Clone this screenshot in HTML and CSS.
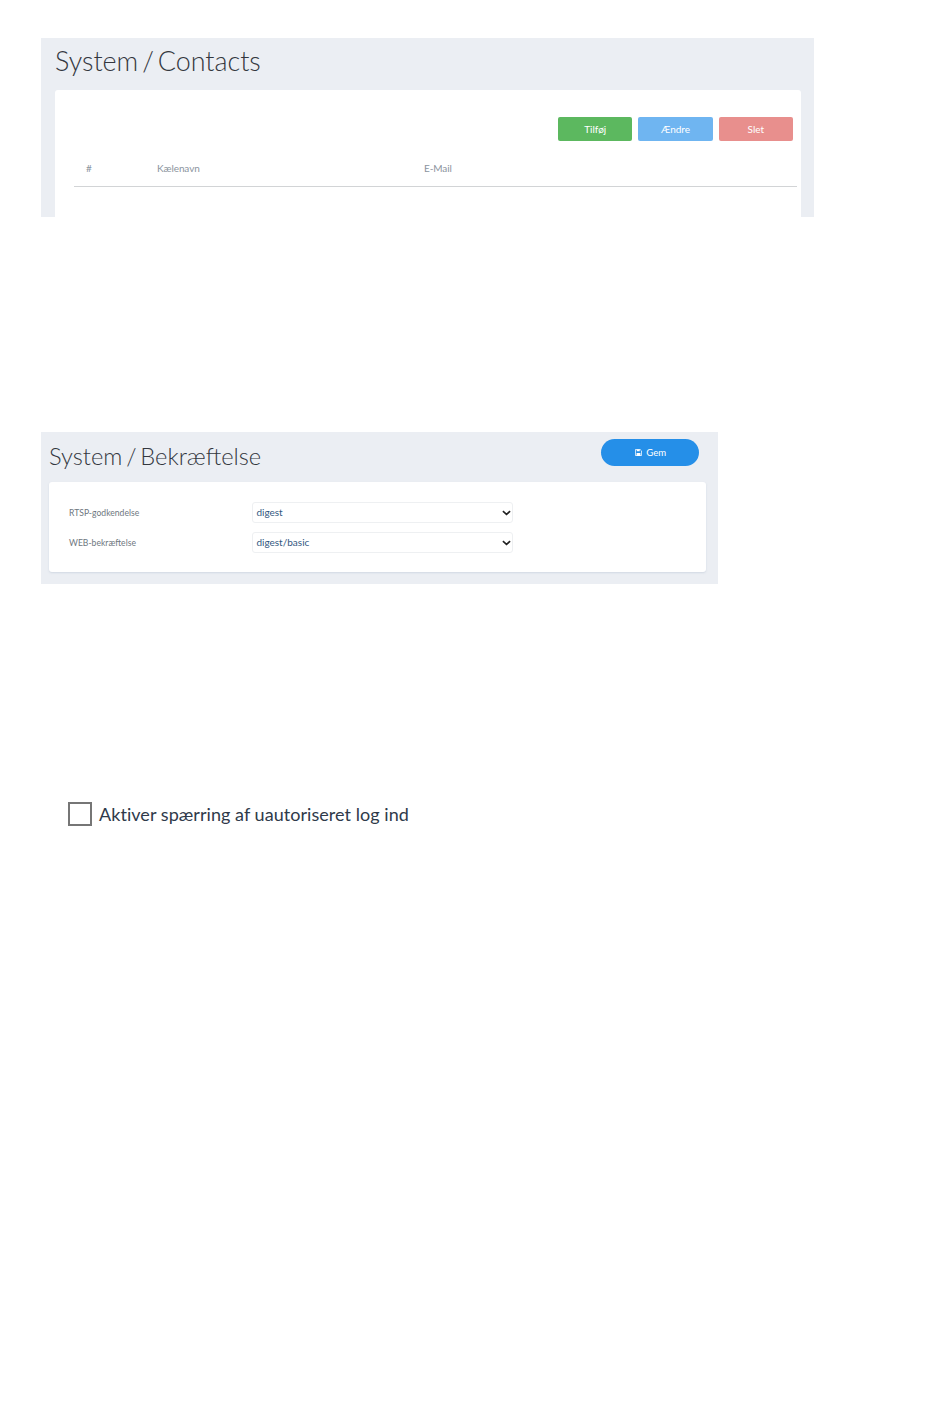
FILE: index.html
```html
<!DOCTYPE html>
<html lang="da">
<head>
<meta charset="utf-8">
<title>System</title>
<link rel="stylesheet" href="styles.css">
</head>
<body>
<section class="panel panel-contacts">
  <header class="panel-head"><h1 class="title title-contacts">System / Contacts</h1></header>
  <div class="card card-contacts">
    <div class="actions">
      <button class="btn btn-green">Tilføj</button>
      <button class="btn btn-blue">Ændre</button>
      <button class="btn btn-red">Slet</button>
    </div>
    <div class="table-head">
      <span class="col-num">#</span>
      <span class="col-nick">Kælenavn</span>
      <span class="col-mail">E-Mail</span>
    </div>
  </div>
</section>

<section class="panel panel-auth">
  <header class="panel-head head-auth">
    <h1 class="title title-auth">System / Bekræftelse</h1>
    <button class="btn-save">
      <svg class="save-icon" viewBox="0 0 8 8" aria-hidden="true"><path fill="none" stroke="currentColor" stroke-width=".9" d="M.5.5h5.3l1.7 1.7v5.3H.5z"/><path fill="currentColor" d="M2 .5h3.4v2.2H2zM1.8 4.6h4.4V8H1.8z"/></svg>
      <span>Gem</span>
    </button>
  </header>
  <div class="card card-auth">
    <div class="form-row">
      <label class="form-label" for="rtsp">RTSP-godkendelse</label>
      <select class="form-select" id="rtsp"><option>digest</option></select>
    </div>
    <div class="form-row">
      <label class="form-label" for="web">WEB-bekræftelse</label>
      <select class="form-select" id="web"><option>digest/basic</option></select>
    </div>
  </div>
</section>

<div class="lock-row">
  <span class="check-box"></span>
  <span class="lock-text">Aktiver spærring af uautoriseret log ind</span>
</div>
</body>
</html>
```
FILE: styles.css
```css
* { box-sizing: border-box; }
html, body { margin: 0; padding: 0; }
body {
  background: #fff;
  font-family: Lato, "Liberation Sans", sans-serif;
  padding: 38px 0 0 41px;
  min-height: 1409px;
}
.panel { background: #ebeef3; }
.panel-contacts {
  width: 773px;
  height: 179px;
  padding: 0 13px 0 14px;
  overflow: hidden;
  margin-bottom: 215px;
}
.panel-auth {
  width: 677px;
  height: 152px;
  padding: 0 12px 0 8px;
  margin-bottom: 218px;
}
.panel-head { height: 52px; display: flex; align-items: center; }
.panel-auth .panel-head { height: 50px; }
.head-auth { justify-content: space-between; }
.title {
  margin: 0;
  font-weight: 300;
  color: #33373e;
  line-height: 1;
}
.title-contacts { font-size: 26.9px; word-spacing: -3.4px; margin-top: -6px; }
.title-auth { font-size: 23.7px; word-spacing: -2.6px; margin-top: -1px; }
.card { background: #fff; border-radius: 3px; }
.card-contacts { height: 160px; padding-top: 27px; }
.actions { display: flex; justify-content: flex-end; gap: 6px; padding-right: 8px; }
.btn {
  width: 74.3px;
  height: 24px;
  border: 0;
  border-radius: 2px;
  color: #fff;
  font: 400 10px Lato, sans-serif;
  padding: 0;
}
.btn-green { background: #5cb85f; }
.btn-blue { background: #6fb5f1; }
.btn-red { background: #e88f8d; }
.table-head {
  display: flex;
  margin: 16px 4px 0 19px;
  height: 30px;
  padding: 0 0 7px 12px;
  align-items: center;
  border-bottom: 1px solid #d2d4d6;
  color: #8b949e;
  font-size: 10px;
  letter-spacing: -.1px;
}
.col-num { width: 71px; }
.col-nick { width: 267px; }
.btn-save {
  display: flex;
  align-items: center;
  justify-content: center;
  gap: 4.5px;
  width: 98px;
  height: 27px;
  margin: -9px 7px 0 0;
  padding: 0 0 0 1px;
  border: 0;
  border-radius: 14px;
  background: #258fe8;
  color: #fff;
  font: 400 9.6px Lato, sans-serif;
}
.save-icon { width: 7px; height: 7px; }
.card-auth {
  height: 90px;
  padding: 20px 20px 0;
  box-shadow: 0 1px 2px rgba(160, 175, 195, .35);
}
.form-row { display: flex; align-items: center; height: 21px; margin-bottom: 9px; }
.form-label { width: 183px; font-size: 8.6px; color: #6e7780; }
.form-select {
  width: 261px;
  height: 21px;
  border: 1px solid #eef0f2;
  border-radius: 3px;
  appearance: none;
  background: #fff url("data:image/svg+xml,%3Csvg xmlns='http://www.w3.org/2000/svg' viewBox='0 0 10 6'%3E%3Cpath fill='none' stroke='%23222' stroke-width='1.8' d='M1 1l4 3.6L9 1'/%3E%3C/svg%3E") no-repeat right 1px center / 9px 6px;
  color: #33587f;
  font: 400 10px Lato, sans-serif;
  padding: 0 0 2px 3.4px;
}
.lock-row { display: flex; align-items: center; gap: 7px; padding-left: 27px; height: 24px; }
.check-box { width: 24px; height: 24px; border: 2px solid #767676; background: #fff; }
.lock-text { font-size: 18px; color: #2f3a4a; line-height: 24px; letter-spacing: .05px; }
```
